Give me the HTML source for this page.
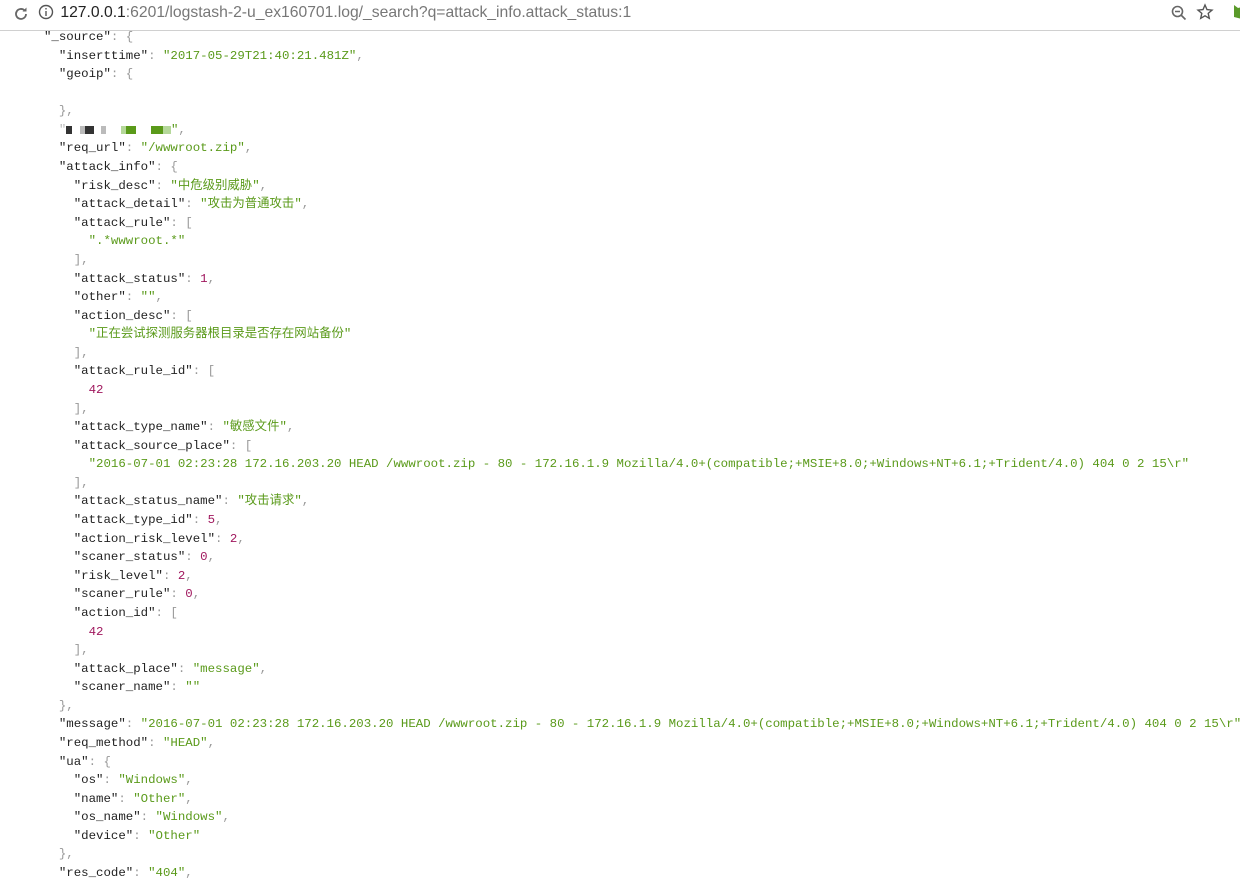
<!DOCTYPE html>
<html><head><meta charset="utf-8"><style>
body{margin:0;width:1240px;height:883px;overflow:hidden;background:#fff;}
.bar{height:30px;border-bottom:1px solid #d0d0d0;background:#fff;position:relative;font-family:"Liberation Sans",sans-serif;}
.url{position:absolute;left:38px;top:0;width:1180px;height:26px;font-size:15.7px;line-height:26px;color:#777;}
.url b{font-weight:normal;color:#222}
pre{margin:0;position:absolute;left:44px;top:28px;font-family:"Liberation Mono","Noto Sans CJK SC",monospace;font-size:12.4px;line-height:18.58px;color:#222;}
.s{color:#5a9a1a}.n{color:#a0185e}.p{color:#999}
.blk{display:inline-block;height:8px;vertical-align:middle}
</style></head><body>
<div class="bar">
<svg style="position:absolute;left:12px;top:5px" width="18" height="18" viewBox="0 0 18 18"><path d="M14 9a5 5 0 1 1-1.5-3.6" fill="none" stroke="#666" stroke-width="1.8"/><path d="M14.5 2.5v4h-4z" fill="#666"/></svg>
<div class="url"><svg style="vertical-align:-3px;margin-right:2px" width="16" height="16" viewBox="0 0 16 16"><circle cx="8" cy="8" r="6.5" fill="none" stroke="#555" stroke-width="1.4"/><rect x="7.3" y="7" width="1.4" height="5" fill="#555"/><rect x="7.3" y="4" width="1.4" height="1.5" fill="#555"/></svg> <b>127.0.0.1</b>:6201/logstash-2-u_ex160701.log/_search?q=attack_info.attack_status:1</div>
<svg style="position:absolute;left:1170px;top:4px" width="18" height="18" viewBox="0 0 18 18"><circle cx="7.5" cy="7.5" r="5" fill="none" stroke="#666" stroke-width="1.6"/><path d="M11 11l4.5 4.5M5 7.5h5" stroke="#666" stroke-width="1.6"/></svg>
<svg style="position:absolute;left:1196px;top:3px" width="18" height="18" viewBox="0 0 18 18"><path d="M9 2l2 4.6 5 .5-3.8 3.3 1.1 4.9L9 12.8 4.7 15.3l1.1-4.9L2 7.1l5-.5z" fill="none" stroke="#555" stroke-width="1.4"/></svg>
<svg style="position:absolute;left:1228px;top:3px" width="14" height="20" viewBox="0 0 14 20"><path d="M6 2l4 3 4-1v12l-8-2z" fill="#5a9a2a"/></svg>
</div>
<pre>"_source"<span class="p">: {</span>
  "inserttime"<span class="p">: </span><span class="s">"2017-05-29T21:40:21.481Z"</span><span class="p">,</span>
  "geoip"<span class="p">: {</span>

  <span class="p">},</span>
  <span style="color:#bbb">"</span><span class="blk" style="width:6px;background:#333"></span> <span class="blk" style="width:5px;background:#bbb"></span><span class="blk" style="width:9px;background:#333"></span> <span class="blk" style="width:5px;background:#bbb"></span>  <span class="blk" style="width:5px;background:#b5d89a"></span><span class="blk" style="width:10px;background:#5a9a1a"></span>  <span class="blk" style="width:12px;background:#5a9a1a"></span><span class="blk" style="width:8px;background:#b5d89a"></span><span class="s">"</span><span class="p">,</span>
  "req_url"<span class="p">: </span><span class="s">"/wwwroot.zip"</span><span class="p">,</span>
  "attack_info"<span class="p">: {</span>
    "risk_desc"<span class="p">: </span><span class="s">"中危级别威胁"</span><span class="p">,</span>
    "attack_detail"<span class="p">: </span><span class="s">"攻击为普通攻击"</span><span class="p">,</span>
    "attack_rule"<span class="p">: [</span>
      <span class="s">".*wwwroot.*"</span>
    <span class="p">],</span>
    "attack_status"<span class="p">: </span><span class="n">1</span><span class="p">,</span>
    "other"<span class="p">: </span><span class="s">""</span><span class="p">,</span>
    "action_desc"<span class="p">: [</span>
      <span class="s">"正在尝试探测服务器根目录是否存在网站备份"</span>
    <span class="p">],</span>
    "attack_rule_id"<span class="p">: [</span>
      <span class="n">42</span>
    <span class="p">],</span>
    "attack_type_name"<span class="p">: </span><span class="s">"敏感文件"</span><span class="p">,</span>
    "attack_source_place"<span class="p">: [</span>
      <span class="s">"2016-07-01 02:23:28 172.16.203.20 HEAD /wwwroot.zip - 80 - 172.16.1.9 Mozilla/4.0+(compatible;+MSIE+8.0;+Windows+NT+6.1;+Trident/4.0) 404 0 2 15\r"</span>
    <span class="p">],</span>
    "attack_status_name"<span class="p">: </span><span class="s">"攻击请求"</span><span class="p">,</span>
    "attack_type_id"<span class="p">: </span><span class="n">5</span><span class="p">,</span>
    "action_risk_level"<span class="p">: </span><span class="n">2</span><span class="p">,</span>
    "scaner_status"<span class="p">: </span><span class="n">0</span><span class="p">,</span>
    "risk_level"<span class="p">: </span><span class="n">2</span><span class="p">,</span>
    "scaner_rule"<span class="p">: </span><span class="n">0</span><span class="p">,</span>
    "action_id"<span class="p">: [</span>
      <span class="n">42</span>
    <span class="p">],</span>
    "attack_place"<span class="p">: </span><span class="s">"message"</span><span class="p">,</span>
    "scaner_name"<span class="p">: </span><span class="s">""</span>
  <span class="p">},</span>
  "message"<span class="p">: </span><span class="s">"2016-07-01 02:23:28 172.16.203.20 HEAD /wwwroot.zip - 80 - 172.16.1.9 Mozilla/4.0+(compatible;+MSIE+8.0;+Windows+NT+6.1;+Trident/4.0) 404 0 2 15\r"</span><span class="p">,</span>
  "req_method"<span class="p">: </span><span class="s">"HEAD"</span><span class="p">,</span>
  "ua"<span class="p">: {</span>
    "os"<span class="p">: </span><span class="s">"Windows"</span><span class="p">,</span>
    "name"<span class="p">: </span><span class="s">"Other"</span><span class="p">,</span>
    "os_name"<span class="p">: </span><span class="s">"Windows"</span><span class="p">,</span>
    "device"<span class="p">: </span><span class="s">"Other"</span>
  <span class="p">},</span>
  "res_code"<span class="p">: </span><span class="s">"404"</span><span class="p">,</span>
</pre>
</body></html>
